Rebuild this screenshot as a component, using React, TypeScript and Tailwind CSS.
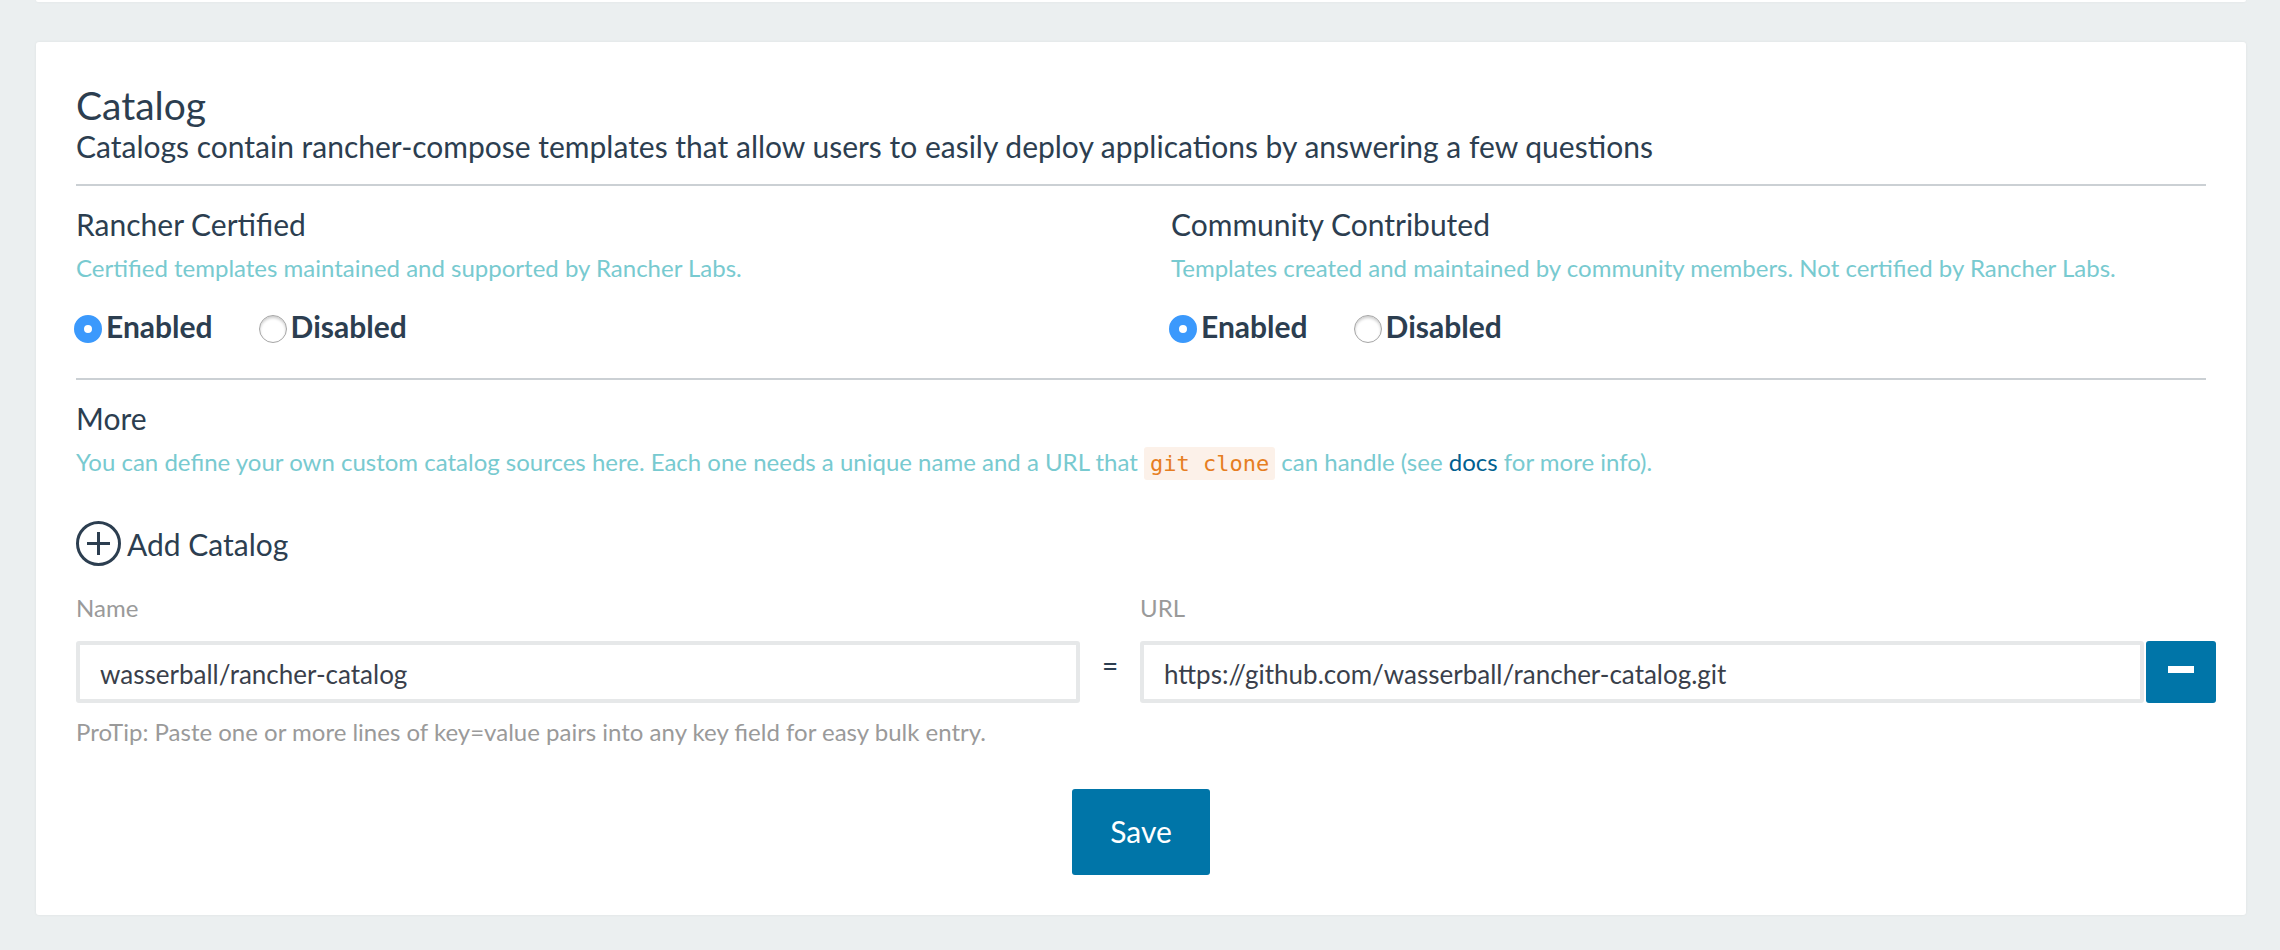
import { useState } from "react";

const radioClass =
  "-ml-0.5 mt-1.5 size-7 shrink-0 appearance-none rounded-full border border-[#a6a6a6] bg-white shadow-[inset_0_2px_3px_rgba(0,0,0,0.2)] checked:border-[10px] checked:border-[#3b99fc] checked:shadow-none";

function Choice({
  name,
  label,
  checked,
  onSelect,
}: {
  name: string;
  label: string;
  checked: boolean;
  onSelect: () => void;
}) {
  return (
    <label className="flex items-center gap-1 text-[30px] leading-[42px] font-bold">
      <input type="radio" name={name} checked={checked} onChange={onSelect} className={radioClass} />
      {label}
    </label>
  );
}

function CatalogToggle({ id, title, description }: { id: string; title: string; description: string }) {
  const [enabled, setEnabled] = useState(true);
  return (
    <div>
      <h3 className="text-[30px] leading-[42px]">{title}</h3>
      <p className="mt-1.5 text-[24px] leading-[34px] text-[#78cad0]">{description}</p>
      <div className="mt-5 flex gap-12">
        <Choice name={id} label="Enabled" checked={enabled} onSelect={() => setEnabled(true)} />
        <Choice name={id} label="Disabled" checked={!enabled} onSelect={() => setEnabled(false)} />
      </div>
    </div>
  );
}

const inputClass =
  "h-[62px] w-full min-w-0 rounded-[3px] border-4 border-[#e6e8e9] bg-white px-5 pt-1 text-[26px] text-[#3a3f4b] outline-none";

export default function App() {
  const [name, setName] = useState("wasserball/rancher-catalog");
  const [url, setUrl] = useState("https://github.com/wasserball/rancher-catalog.git");

  return (
    <div className="min-h-screen bg-[#ebeff0] pr-[34px] pb-8 pl-9 font-['Lato',sans-serif] text-[#2c3e50]">
      <div className="h-0.5 rounded-b-sm bg-white shadow-[0_0_3px_rgba(0,0,0,0.06)]" />
      <main className="mt-10 rounded-[3px] bg-white px-10 pt-[43px] pb-10 shadow-[0_0_3px_rgba(0,0,0,0.06)]">
        <h2 className="text-[39px] leading-[40px]">Catalog</h2>
        <p className="text-[30px] leading-[42px]">
          Catalogs contain rancher-compose templates that allow users to easily deploy applications by answering a few
          questions
        </p>
        <hr className="mt-[17px] border-t-2 border-[#cbd0d4]" />

        <div className="mt-[17px] grid grid-cols-2 gap-[60px]">
          <CatalogToggle
            id="certified"
            title="Rancher Certified"
            description="Certified templates maintained and supported by Rancher Labs."
          />
          <CatalogToggle
            id="community"
            title="Community Contributed"
            description="Templates created and maintained by community members. Not certified by Rancher Labs."
          />
        </div>
        <hr className="mt-[31px] border-t-2 border-[#cbd0d4]" />

        <h3 className="mt-[17px] text-[30px] leading-[42px]">More</h3>
        <p className="mt-1.5 text-[24px] leading-[34px] text-[#78cad0]">
          You can define your own custom catalog sources here. Each one needs a unique name and a URL that{" "}
          <code className="rounded-[3px] bg-[#fcf1e9] px-1.5 py-1 font-['DejaVu_Sans_Mono',monospace] text-[22px] leading-6 text-[#e67e22]">
            git clone
          </code>{" "}
          can handle (see{" "}
          <a href="#docs" className="text-[#00608f]">
            docs
          </a>{" "}
          for more info).
        </p>

        <button type="button" className="mt-[42px] flex items-center gap-[5px] text-[30px] leading-[46px]">
          <svg viewBox="0 0 46 46" className="size-[46px]" fill="none" stroke="currentColor" strokeWidth="3" aria-hidden="true">
            <circle cx="22.5" cy="22.5" r="21" />
            <path d="M11 22.5h23M22.5 11v23" />
          </svg>
          Add Catalog
        </button>

        <div className="mt-6 -mr-2.5 grid grid-cols-[1fr_60px_1fr_72px] gap-y-4 text-[24px]">
          <label htmlFor="catalog-name" className="leading-[34px] text-[#9a9a9a]">
            Name
          </label>
          <label htmlFor="catalog-url" className="col-start-3 leading-[34px] text-[#9a9a9a]">
            URL
          </label>
          <input
            id="catalog-name"
            type="text"
            value={name}
            onChange={(e) => setName(e.target.value)}
            className={inputClass + " col-start-1"}
          />
          <span className="text-center text-[28px] leading-[48px]">=</span>
          <input id="catalog-url" type="text" value={url} onChange={(e) => setUrl(e.target.value)} className={inputClass} />
          <button
            type="button"
            aria-label="Remove catalog"
            className="ml-0.5 flex items-center justify-center rounded-[3px] bg-[#0075a8] pb-1.5 text-white"
          >
            <svg viewBox="0 0 26 7" className="h-[7px] w-[26px]" fill="currentColor" aria-hidden="true">
              <rect width="26" height="7" />
            </svg>
          </button>
        </div>
        <p className="mt-3 text-[24px] leading-[34px] text-[#9a9a9a]">
          ProTip: Paste one or more lines of key=value pairs into any key field for easy bulk entry.
        </p>

        <div className="mt-10 flex justify-center">
          <button type="button" className="h-[86px] rounded-[3px] bg-[#0075a8] px-[38px] pb-0.5 text-[30px] text-white">
            Save
          </button>
        </div>
      </main>
    </div>
  );
}
